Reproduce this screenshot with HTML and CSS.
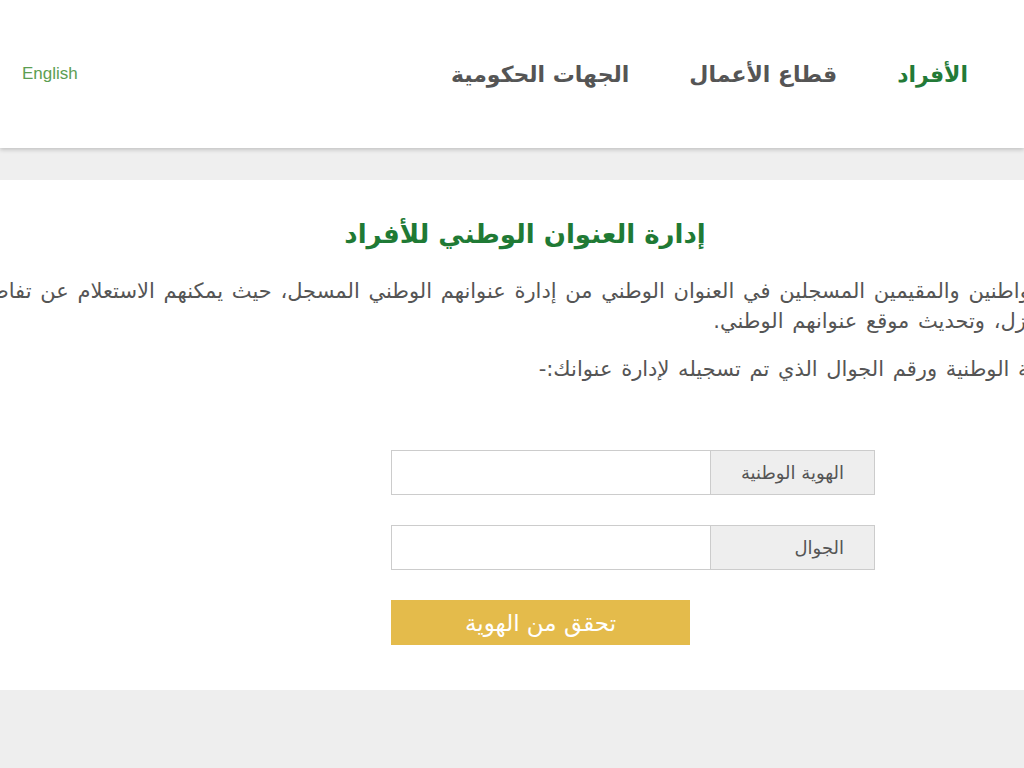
FILE: index.html
```html
<!DOCTYPE html>
<html lang="ar">
<head>
<meta charset="utf-8">
<title>إدارة العنوان الوطني للأفراد</title>
<link rel="stylesheet" href="styles.css">
</head>
<body>
<header class="topbar">
  <a class="lang" href="#">English</a>
  <nav class="mainnav">
    <a class="navitem active" href="#">الأفراد</a>
    <a class="navitem" href="#">قطاع الأعمال</a>
    <a class="navitem" href="#">الجهات الحكومية</a>
  </nav>
</header>
<div class="band"></div>
<main class="content">
  <h1 class="title">إدارة العنوان الوطني للأفراد</h1>
  <div class="clip">
    <div class="line l1">للمواطنين والمقيمين المسجلين في العنوان الوطني من إدارة عنوانهم الوطني المسجل، حيث يمكنهم الاستعلام عن تفاصيل عنوانهم الوطني</div>
    <div class="line l2">المنزل، وتحديث موقع عنوانهم الوطني.</div>
    <div class="line l3">الهوية الوطنية ورقم الجوال الذي تم تسجيله لإدارة عنوانك:-</div>
  </div>
  <form class="form">
    <div class="field">
      <label class="addon">الهوية الوطنية</label>
      <input class="input" type="text">
    </div>
    <div class="field">
      <label class="addon">الجوال</label>
      <input class="input" type="text">
    </div>
    <div class="actions">
      <button class="btn" type="button">تحقق من الهوية</button>
    </div>
  </form>
</main>
<div class="bottom"></div>
</body>
</html>
```
FILE: styles.css
```css
html, body {
  margin: 0;
  padding: 0;
}
body {
  background: #eeeeee;
  font-family: "DejaVu Sans", "Noto Sans", sans-serif;
  overflow: hidden;
  width: 1024px;
  height: 768px;
}
.topbar {
  height: 148px;
  background: #ffffff;
  display: flex;
  align-items: center;
  justify-content: space-between;
  padding: 0 56px 0 22px;
  box-shadow: 0 2px 4px rgba(0, 0, 0, 0.18);
  position: relative;
  z-index: 1;
}
.lang {
  color: #5c9e52;
  font-family: "Liberation Sans", Arial, sans-serif;
  font-size: 17px;
  text-decoration: none;
}
.mainnav {
  display: flex;
  direction: rtl;
  gap: 60px;
}
.navitem {
  font-size: 22px;
  font-weight: bold;
  color: #555555;
  text-decoration: none;
}
.navitem.active {
  color: #237a37;
}
.band {
  height: 32px;
  background: #efefef;
}
.content {
  background: #ffffff;
  height: 510px;
  padding-top: 1px;
  box-sizing: border-box;
}
.title {
  margin: 33px 0 0 26px;
  text-align: center;
  font-size: 26px;
  font-weight: bold;
  color: #1f7a35;
  line-height: 40px;
}
.clip {
  margin-top: 22px;
  overflow: hidden;
  direction: rtl;
}
.line {
  white-space: nowrap;
  font-size: 21px;
  word-spacing: 2px;
  color: #555555;
  line-height: 30px;
}
.line.l1 {
  margin-right: -32px;
}
.line.l2 {
  margin-right: -34px;
}
.line.l3 {
  margin-top: 18px;
  margin-right: -44px;
}
.form {
  margin: 66px 0 0 391px;
  width: 484px;
  direction: rtl;
}
.field {
  display: flex;
  height: 45px;
  margin-bottom: 30px;
}
.addon {
  width: 165px;
  box-sizing: border-box;
  background: #eeeeee;
  border: 1px solid #cccccc;
  color: #555555;
  font-size: 18px;
  display: flex;
  align-items: center;
  padding-right: 30px;
}
.input {
  flex: 1;
  border: 1px solid #cccccc;
  border-right: none;
  background: #ffffff;
  margin: 0;
  padding: 0 10px;
  font-size: 14px;
  outline: none;
}
.actions {
  display: flex;
  justify-content: flex-end;
}
.btn {
  width: 299px;
  height: 45px;
  background: #e4bb4b;
  border: none;
  color: #ffffff;
  font-family: "DejaVu Sans", sans-serif;
  font-size: 23px;
  cursor: pointer;
}
```
